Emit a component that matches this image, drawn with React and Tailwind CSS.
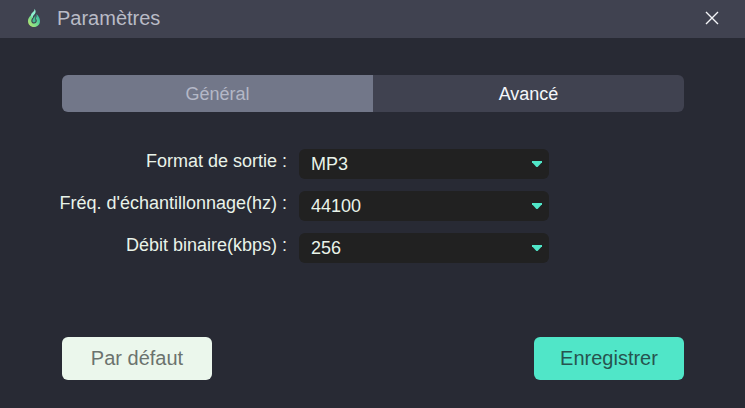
import React, { useState } from 'react';

const fields = [
  { id: 'format', label: 'Format de sortie :', options: ['MP3', 'WAV', 'FLAC', 'M4A'] },
  { id: 'rate', label: "Fréq. d'échantillonnage(hz) :", options: ['22050', '44100', '48000'] },
  { id: 'bitrate', label: 'Débit binaire(kbps) :', options: ['128', '192', '256', '320'] },
];

const defaults = { format: 'MP3', rate: '44100', bitrate: '256' };

function Logo() {
  return (
    <svg className="h-5 w-4" viewBox="0 0 16 20" fill="none" aria-hidden="true">
      <defs>
        <linearGradient id="flame" x1="2" y1="17" x2="14" y2="8" gradientUnits="userSpaceOnUse">
          <stop offset="0" stopColor="#b9e46e" />
          <stop offset="0.5" stopColor="#6fdc92" />
          <stop offset="1" stopColor="#2fb5a4" />
        </linearGradient>
      </defs>
      <path
        d="M5.8 6.4C3.2 8.6 2 10.6 2 13C2 16.6 4.6 19 8 19C11.4 19 14 16.6 14 13C14 10.2 12.6 8 10.4 6C10.8 8.2 10.5 9.4 9.8 10.4C10.5 11.2 10.8 12 10.8 12.8C10.8 14.4 9.6 15.5 8 15.5C6.4 15.5 5.3 14.4 5.3 12.9C5.3 11.4 6 10.4 7.1 9.2Z"
        fill="url(#flame)"
      />
      <path d="M8.6 0.8C8.8 3 6.8 4 5.4 5.8C4.6 7 5.2 8.6 6.4 9.8C6.6 8.2 7.8 7.2 8.8 6C10 4.6 9.9 2.6 8.6 0.8Z" fill="#8ff0d0" />
      <path d="M9 7C9.3 9 6.4 10.6 6.4 12.8C6.4 13.9 7.2 14.5 8 14.5C8.9 14.5 9.6 13.8 9.6 12.8C9.6 11.6 9 11.2 9.3 9.8C9.5 8.8 9.6 7.8 9 7Z" fill="#41bd91" />
    </svg>
  );
}

export default function App() {
  const [tab, setTab] = useState('general');
  const [values, setValues] = useState(defaults);

  return (
    <div className="flex min-h-screen flex-col bg-[#282a34] font-['Liberation_Sans',Arial,sans-serif]">
      <header className="flex h-[38px] items-center bg-[#404250] pr-6 pb-[3px] pl-[26px]">
        <Logo />
        <h1 className="ml-[15px] flex-1 text-xl leading-6 text-[#b9bbc6]">Paramètres</h1>
        <button type="button" aria-label="Fermer" className="flex h-6 w-[18px] items-center justify-center">
          <svg className="h-[14px] w-[14px]" viewBox="0 0 14 14" fill="none" stroke="#f4f5f8" strokeWidth="1.4">
            <path d="M1 1L13 13M13 1L1 13" />
          </svg>
        </button>
      </header>

      <main className="flex flex-1 flex-col pt-[37px] pr-[61px] pb-7 pl-[62px]">
        <div role="tablist" className="grid h-[37px] grid-cols-2 overflow-hidden rounded-md text-lg leading-6">
          <button
            type="button"
            role="tab"
            aria-selected={tab === 'general'}
            onClick={() => setTab('general')}
            className="bg-[#727789] text-[#b4b8c7]"
          >
            Général
          </button>
          <button
            type="button"
            role="tab"
            aria-selected={tab === 'advanced'}
            onClick={() => setTab('advanced')}
            className="bg-[#404250] text-[#f4f6fb]"
          >
            Avancé
          </button>
        </div>

        <div className="mt-[37px] -ml-1 flex flex-col gap-3 text-lg leading-6 text-[#e9f3e9]">
          {fields.map((field) => (
            <div key={field.id} className="flex items-start gap-3">
              <label htmlFor={field.id} className="w-[229px] text-right whitespace-nowrap">
                {field.label}
              </label>
              <div className="relative w-[250px]">
                <select
                  id={field.id}
                  value={values[field.id]}
                  onChange={(e) => setValues({ ...values, [field.id]: e.target.value })}
                  className="block h-[30px] w-full appearance-none rounded-md bg-[#212121] px-3"
                >
                  {field.options.map((option) => (
                    <option key={option}>{option}</option>
                  ))}
                </select>
                <svg
                  className="pointer-events-none absolute top-3 right-[7px] h-[6px] w-[10px]"
                  viewBox="0 0 10 6"
                  fill="#50e6c8"
                  aria-hidden="true"
                >
                  <path d="M0 0H10V1.2L5.6 6H4.4L0 1.2Z" />
                </svg>
              </div>
            </div>
          ))}
        </div>

        <div className="mt-auto flex justify-between text-xl leading-6">
          <button
            type="button"
            onClick={() => setValues(defaults)}
            className="h-[43px] w-[150px] rounded-md bg-[#ebf7ec] pb-0.5 text-[#6b736e]"
          >
            Par défaut
          </button>
          <button type="button" className="h-[43px] w-[150px] rounded-md bg-[#50e6c8] pb-0.5 text-[#27544f]">
            Enregistrer
          </button>
        </div>
      </main>
    </div>
  );
}
